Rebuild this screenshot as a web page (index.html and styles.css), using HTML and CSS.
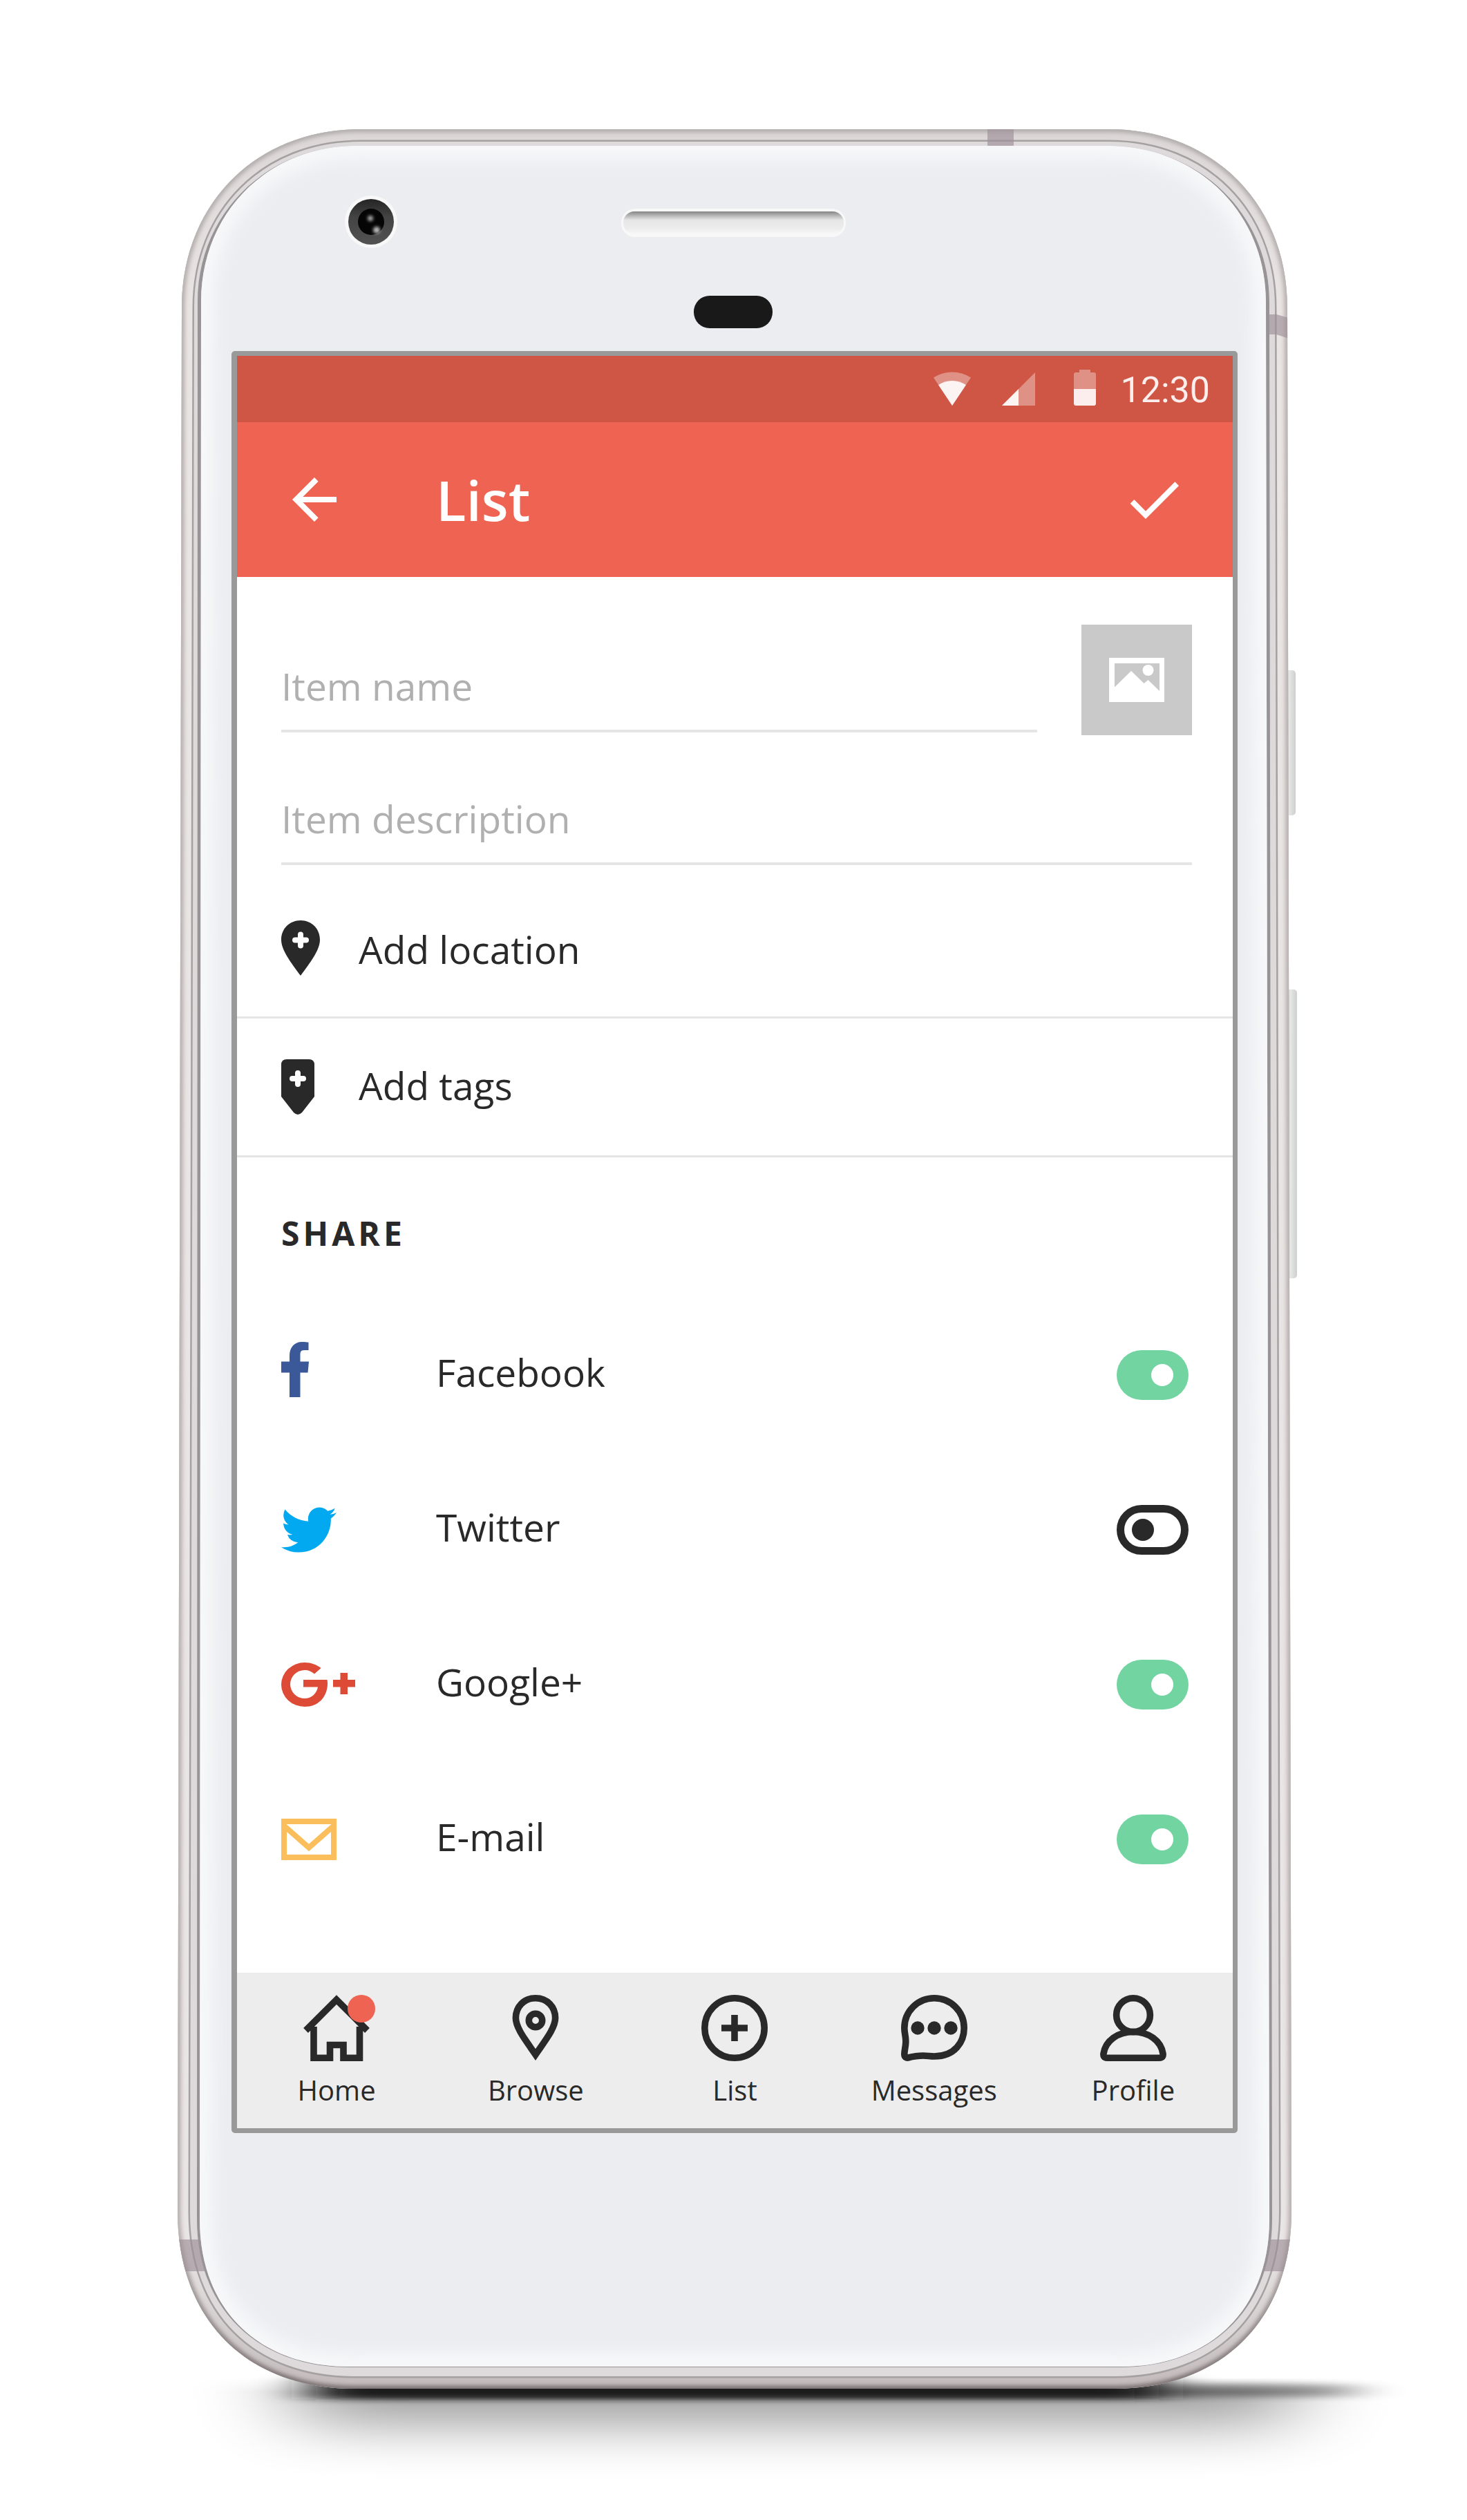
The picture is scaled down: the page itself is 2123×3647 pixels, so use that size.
FILE: index.html
```html
<!DOCTYPE html>
<html lang="en">
<head>
<meta charset="utf-8">
<meta name="viewport" content="width=device-width, initial-scale=1">
<title>List</title>
<link rel="stylesheet" href="styles.css">
</head>
<body>
<div class="stage">
  <div class="phone">
    <svg class="phone-art" viewBox="0 0 1612 3270" preserveAspectRatio="none" aria-hidden="true">
      <defs>
        <path id="body-shape" d="M264 0H1348C1498 0 1606 108 1606 258L1612 3014C1612 3170 1512 3270 1356 3270H256C100 3270 0 3170 0 3014L6 258C6 108 114 0 264 0Z"/>
        <path id="face-shape" d="M260 24H1346C1477 24 1575 122 1575 250L1580 3025C1580 3155 1495 3238 1364 3238H248C117 3238 32 3155 32 3025L34 250C34 122 129 24 260 24Z"/>
        <clipPath id="body-clip"><use href="#body-shape"/></clipPath>
        <clipPath id="face-clip"><use href="#face-shape"/></clipPath>
        <linearGradient id="edge" gradientUnits="userSpaceOnUse" x1="0" y1="0" x2="0" y2="3270">
          <stop offset="0" stop-color="#aca8a7"/><stop offset=".08" stop-color="#b0a8a8"/>
          <stop offset=".93" stop-color="#b0a8a8"/><stop offset="1" stop-color="#716768"/>
        </linearGradient>
        <linearGradient id="metal" gradientUnits="userSpaceOnUse" x1="0" y1="0" x2="0" y2="3270">
          <stop offset="0" stop-color="#dcd6d6"/><stop offset=".08" stop-color="#eae5e4"/>
          <stop offset=".94" stop-color="#e9e5e4"/><stop offset="1" stop-color="#c2babb"/>
        </linearGradient>
        <linearGradient id="key" x1="0" x2="1"><stop offset="0" stop-color="#c3c5c4"/><stop offset=".4" stop-color="#e6e8e6"/><stop offset="1" stop-color="#cdcfcf"/></linearGradient>
        <linearGradient id="slot" x1="0" y1="0" x2="0" y2="1"><stop offset="0" stop-color="#858585"/><stop offset=".16" stop-color="#b0b0b0"/><stop offset=".38" stop-color="#e6e6e6"/><stop offset=".75" stop-color="#ededed"/><stop offset="1" stop-color="#f8f8f8"/></linearGradient>
        <linearGradient id="lens" x1="0" y1="0" x2="0" y2="1"><stop offset="0" stop-color="#242424"/><stop offset=".4" stop-color="#444"/><stop offset="1" stop-color="#525252"/></linearGradient>
        <linearGradient id="fade" x1="0" y1="0" x2="0" y2="1"><stop offset="0" stop-color="#000"/><stop offset=".1" stop-color="#fff"/></linearGradient>
        <mask id="floor" maskUnits="userSpaceOnUse" x="-200" y="3254" width="2066" height="206"><rect x="-200" y="3254" width="2066" height="206" fill="url(#fade)"/></mask>
        <filter id="blur-edge" x="-5%" y="-5%" width="110%" height="110%"><feGaussianBlur stdDeviation="3"/></filter>
        <filter id="blur-glow" x="-5%" y="-5%" width="110%" height="110%"><feGaussianBlur stdDeviation="14"/></filter>
        <filter id="blur-contact" x="-20%" y="-200%" width="140%" height="500%"><feGaussianBlur stdDeviation="38 4"/></filter>
        <filter id="blur-floor" x="-20%" y="-200%" width="140%" height="500%"><feGaussianBlur stdDeviation="70 38"/></filter>
        <filter id="blur-dot" x="-100%" y="-100%" width="300%" height="300%"><feGaussianBlur stdDeviation="2"/></filter>
      </defs>

      <g mask="url(#floor)"><rect x="170" y="3190" width="1440" height="130" opacity=".4" filter="url(#blur-floor)"/></g>
      <rect x="260" y="3264" width="1440" height="18" opacity=".34" filter="url(#blur-contact)"/>
      <rect x="200" y="3252" width="1220" height="33" fill="#1c1c1c" filter="url(#blur-contact)"/>

      <rect x="1602" y="783" width="16" height="210" rx="5" fill="url(#key)"/>
      <rect x="1604" y="1245" width="16" height="418" rx="5" fill="url(#key)"/>

      <g clip-path="url(#body-clip)">
        <use href="#body-shape" fill="#dedadb"/>
        <g fill="none">
          <use href="#body-shape" stroke="#a5a1a2" stroke-width="36"/>
          <use href="#body-shape" stroke="url(#metal)" stroke-width="31"/>
          <use href="#body-shape" stroke="url(#edge)" stroke-width="8" filter="url(#blur-edge)"/>
        </g>
        <g fill="#9c8f96" opacity=".65">
          <rect x="1172" y="0" width="38" height="25"/>
          <path d="M1570 268H1590L1612 274V304L1590 297H1570Z"/>
          <rect x="0" y="3054" width="50" height="46"/>
          <rect x="1560" y="3054" width="52" height="46"/>
        </g>
        <path d="M260 24H1346C1477 24 1580 122 1580 250L1584 3025C1584 3155 1495 3239 1364 3239H248C117 3239 28 3155 28 3025L29 250C29 122 129 24 260 24Z" fill="#989495"/>
      </g>
      <use href="#face-shape" fill="#ecedf1"/>
      <g clip-path="url(#face-clip)"><use href="#face-shape" fill="none" stroke="#fbfcfc" stroke-width="28" filter="url(#blur-glow)"/></g>

      <circle cx="280" cy="134" r="38" fill="#f8f8f8"/>
      <circle cx="280" cy="134" r="33" fill="url(#lens)"/>
      <circle cx="280" cy="134" r="19" fill="#050505"/>
      <circle cx="279" cy="129" r="4" fill="#aaa" filter="url(#blur-dot)"/>
      <circle cx="288" cy="146" r="5" fill="#bbb" filter="url(#blur-dot)"/>
      <rect x="642" y="115" width="325" height="41" rx="20" fill="#f8f8f9"/>
      <rect x="645" y="119" width="319" height="33" rx="16" fill="url(#slot)"/>
      <rect x="747" y="241" width="114" height="47" rx="23" fill="#191919"/>
    </svg>

    <main class="screen">
      <div class="status-bar">
        <svg class="status-icon" viewBox="0 0 96 56" aria-hidden="true"><path d="M48 52L21 11.500C37 .800 59 .800 75 11.500Z" fill="#fff" opacity=".35"/><path d="M48 52L28 22C40 14 56 14 68 22Z" fill="#fff" opacity=".9"/></svg>
        <svg class="status-icon" viewBox="0 0 96 56" aria-hidden="true"><path d="M24 52L72 4V52Z" fill="#fff" opacity=".35"/><path d="M24 52L48 28V52Z" fill="#fff" opacity=".9"/></svg>
        <svg class="status-icon" viewBox="0 0 96 56" aria-hidden="true"><path d="M32 28V7Q32 4 35 4H40V0H56V4H61Q64 4 64 7V28Z" fill="#fff" opacity=".35"/><path d="M32 28H64V49Q64 52 61 52H35Q32 52 32 49Z" fill="#fff" opacity=".9"/></svg>
        <time class="clock">12:30</time>
      </div>

      <header class="app-bar">
        <button class="icon-button" type="button" aria-label="Back"><svg viewBox="0 0 24 24" aria-hidden="true"><path fill="#fff" d="M20 11H7.830l5.590-5.590L12 4l-8 8 8 8 1.410-1.410L7.830 13H20v-2z"/></svg></button>
        <h1 class="title">List</h1>
        <button class="icon-button" type="submit" form="item-form" aria-label="Save"><svg viewBox="0 0 24 24" aria-hidden="true"><path fill="#fff" d="M9 16.170L4.830 12l-1.420 1.410L9 19 21 7l-1.410-1.410z"/></svg></button>
      </header>

      <form class="item-form" id="item-form">
        <div class="fields">
          <div class="name-row">
            <input class="field field-name" type="text" placeholder="Item name" aria-label="Item name">
            <button class="photo-button" type="button" aria-label="Add photo">
              <svg width="80" height="64" viewBox="0 0 80 64" aria-hidden="true"><path fill="#fff" fill-rule="evenodd" d="M0 0H80V64H0ZM8 8V42.500L32 19L50.500 37L56.500 32L73 48V8Z"/><circle cx="56.500" cy="18" r="8" fill="#fff"/></svg>
            </button>
          </div>
          <input class="field field-description" type="text" placeholder="Item description" aria-label="Item description">
        </div>

        <button class="add-row add-location" type="button">
          <span class="add-icon"><svg width="56" height="80" viewBox="0 0 56 80" aria-hidden="true"><path fill="#292929" d="M28 0C12 0 0 12 0 28C0 43 14 61 28 80C42 61 56 43 56 28C56 12 44 0 28 0Z"/><path d="M20 28.500H36M28 20.500V36.500" stroke="#fff" stroke-width="8" stroke-linecap="round"/></svg></span>
          <span>Add location</span>
        </button>
        <button class="add-row" type="button">
          <span class="add-icon"><svg width="56" height="80" viewBox="0 0 56 80" aria-hidden="true"><path fill="#292929" d="M8 0H40Q48 0 48 8V54L30 77Q24 83 18 77L0 54V8Q0 0 8 0Z"/><path d="M16 28H32M24 20V36" stroke="#fff" stroke-width="8" stroke-linecap="round"/></svg></span>
          <span>Add tags</span>
        </button>

        <section class="share">
          <h2 class="share-title">SHARE</h2>
          <div class="share-row">
            <span class="share-icon"><svg width="40" height="96" viewBox="0 0 40 96" aria-hidden="true"><path fill="#3b5998" d="M12 80V44.500H0V28.500H12V20C12 8 19 0 30 0C34 0 38 .400 39.500 .800V12H33C28 12 27.500 15 27.500 19V28.500H40L38.500 44.500H27.500V80Z"/></svg></span>
            <label for="share-facebook">Facebook</label>
            <input class="toggle" type="checkbox" id="share-facebook" checked>
          </div>
          <div class="share-row">
            <span class="share-icon"><svg width="80" height="66" viewBox="0 2.200 24 19.600" aria-hidden="true"><path fill="#03a9f0" d="M23.953 4.570a10 10 0 01-2.825.775 4.958 4.958 0 002.163-2.723c-.951.555-2.005.959-3.127 1.184a4.920 4.920 0 00-8.384 4.482C7.690 8.095 4.067 6.130 1.640 3.162a4.822 4.822 0 00-.666 2.475c0 1.710.870 3.213 2.188 4.096a4.904 4.904 0 01-2.228-.616v.060a4.923 4.923 0 003.946 4.827 4.996 4.996 0 01-2.212.085 4.936 4.936 0 004.604 3.417 9.867 9.867 0 01-6.102 2.105c-.390 0-.779-.023-1.170-.067a13.995 13.995 0 007.557 2.209c9.053 0 13.998-7.496 13.998-13.985 0-.210 0-.420-.015-.630A9.935 9.935 0 0024 4.590z"/></svg></span>
            <label for="share-twitter">Twitter</label>
            <input class="toggle" type="checkbox" id="share-twitter">
          </div>
          <div class="share-row">
            <span class="share-icon"><svg width="108" height="64" viewBox="0 0 108 64" aria-hidden="true"><path fill="#dd4b37" d="M32 25H66.500C67 28 67 29 67 32C66 51 53 64 34 64A34 32 0 0 1 34 0C43 0 51 3 57.600 8L48 16.600C44 13 39.500 11 34 11A21 20.500 0 0 0 34 52C43 52 51 46 53 35.500H32ZM75 25H85.500V15H96V25H107V35.500H96V46H85.500V35.500H75Z"/></svg></span>
            <label for="share-google">Google+</label>
            <input class="toggle" type="checkbox" id="share-google" checked>
          </div>
          <div class="share-row">
            <span class="share-icon"><svg width="80" height="60" viewBox="0 0 80 60" aria-hidden="true" fill="none" stroke="#fabf5c" stroke-width="8"><rect x="4" y="4" width="72" height="52"/><path d="M6 12L40 42L74 12"/></svg></span>
            <label for="share-email">E-mail</label>
            <input class="toggle" type="checkbox" id="share-email" checked>
          </div>
        </section>
      </form>

      <nav class="tab-bar">
        <a class="tab" href="#home">
          <span class="tab-icon"><svg viewBox="0 0 96 96" aria-hidden="true"><path d="M15 46V91.200H38.500V72.500H58V91.200H81.500V46M3.500 51.500L48 7L92.500 51.500"/></svg><span class="badge"></span></span>
          Home
        </a>
        <a class="tab" href="#browse">
          <span class="tab-icon"><svg viewBox="0 0 96 96" aria-hidden="true"><path d="M48 4.800C31 4.800 19.400 17.500 19.400 33.600C19.400 48 34 66 48 86.500C62 66 76.600 48 76.600 33.600C76.600 17.500 65 4.800 48 4.800Z"/><circle cx="48" cy="37" r="9.700"/></svg></span>
          Browse
        </a>
        <a class="tab" href="#list">
          <span class="tab-icon"><svg viewBox="0 0 96 96" aria-hidden="true"><circle cx="48" cy="48" r="43.200"/><path d="M29 48H67M48 29V67"/></svg></span>
          List
        </a>
        <a class="tab" href="#messages">
          <span class="tab-icon"><svg viewBox="0 0 96 96" aria-hidden="true"><path d="M48 89C78 89 91.200 68 91.200 48C91.200 24 72 4.800 48 4.800S4.800 24 4.800 48C4.800 56 7 60 6.800 68C6.600 76 4.800 80 4.800 86C5 90 7 91.500 10 91C18 89 22 88 32 88C38 88 42 89 48 89Z"/><g fill="#292929" stroke="none"><circle cx="24" cy="48" r="9.700"/><circle cx="48" cy="48" r="9.700"/><circle cx="72" cy="48" r="9.700"/></g></svg></span>
          Messages
        </a>
        <a class="tab" href="#profile">
          <span class="tab-icon"><svg viewBox="0 0 96 96" aria-hidden="true"><circle cx="48" cy="29.200" r="24.400"/><path d="M5 85C8 66 26 53.500 48 53.500S88 66 91 85C91.600 89 90 91.200 86 91.200H10C6 91.200 4.400 89 5 85Z"/></svg></span>
          Profile
        </a>
      </nav>
    </main>
  </div>
</div>
</body>
</html>
```

FILE: styles.css
```css
* {
  box-sizing: border-box;
}

body {
  margin: 0;
  background: #fff;
  color: #292929;
  font-family: "Open Sans", "Noto Sans", sans-serif;
  font-size: 55px;
  line-height: 76px;
}

button {
  padding: 0;
  border: 0;
  background: none;
  color: inherit;
  font: inherit;
  text-align: left;
}

svg {
  display: block;
}

.stage {
  overflow: hidden;
  padding: 187px 254px 190px 257px;
}

.phone {
  position: relative;
  padding: 321px 78px 370px;
}

.phone-art {
  position: absolute;
  inset: 0;
  width: 100%;
  height: 100%;
  overflow: visible;
}

.screen {
  position: relative;
  border: 7px solid #999;
  border-left-width: 8px;
  border-radius: 5px;
  background: #fff;
}

.status-bar {
  display: flex;
  align-items: center;
  justify-content: flex-end;
  height: 96px;
  padding-right: 33px;
  background: #cf5645;
}

.status-icon {
  width: 96px;
  height: 56px;
}

.clock {
  padding: 4px 0 0 4px;
  color: #fbeeec;
  font-family: Roboto, sans-serif;
  font-size: 52px;
}

.app-bar {
  display: flex;
  align-items: center;
  height: 224px;
  padding: 0 66px 0 64px;
  background: #ee6352;
  color: #fff;
}

.icon-button {
  width: 96px;
  height: 96px;
}

.title {
  flex: 1;
  margin: 0;
  padding-left: 128px;
  font-size: 80px;
  font-weight: 600;
  line-height: 112px;
}

.fields {
  padding: 69px 59px 0 64px;
}

.name-row {
  display: flex;
  align-items: flex-start;
  gap: 64px;
}

.field {
  display: block;
  width: 100%;
  min-width: 0;
  border: 0;
  border-bottom: 4px solid #e5e5e5;
  border-radius: 0;
  background: none;
  color: inherit;
  font: inherit;
}

.field::placeholder {
  color: #b0b0b0;
  opacity: 1;
}

.field-name {
  flex: 1;
  height: 156px;
  padding: 50px 0 26px;
}

.field-description {
  height: 188px;
  padding: 82px 0 26px;
}

.photo-button {
  display: grid;
  flex: none;
  place-items: center;
  width: 160px;
  height: 160px;
  background: #c9c9c9;
}

.add-row {
  display: flex;
  align-items: flex-start;
  width: 100%;
  padding: 59px 64px;
  border-bottom: 3px solid #e5e5e5;
}

.add-location {
  align-items: flex-end;
  padding-top: 80px;
}

.add-icon {
  width: 112px;
  height: 80px;
}

.share {
  padding: 78px 64px 81px;
}

.share-title {
  margin: 0 0 61px;
  font-size: 48px;
  font-weight: 700;
  line-height: 64px;
  letter-spacing: 5px;
}

.share-row {
  display: flex;
  align-items: center;
  height: 224px;
}

.share-icon {
  width: 224px;
}

.share-row label {
  flex: 1;
  padding-bottom: 8px;
}

.toggle {
  display: flex;
  align-items: center;
  width: 104px;
  height: 72px;
  margin: 0;
  padding-left: 11px;
  border: 11px solid #292929;
  border-radius: 36px;
  appearance: none;
}

.toggle::before {
  width: 32px;
  height: 32px;
  border-radius: 50%;
  background: #292929;
  content: "";
}

.toggle:checked {
  padding-left: 50px;
  border: 0;
  background: #72d5a1;
}

.toggle:checked::before {
  background: #fff;
}

.tab-bar {
  display: grid;
  grid-template-columns: repeat(5, 1fr);
  padding: 32px 0 27px;
  background: #ededed;
}

.tab {
  display: flex;
  flex-direction: column;
  align-items: center;
  gap: 14px;
  color: inherit;
  font-size: 40px;
  line-height: 56px;
  text-decoration: none;
}

.tab-icon {
  position: relative;
  width: 96px;
  height: 96px;
  fill: none;
  stroke: #292929;
  stroke-width: 9.6;
}

.badge {
  position: absolute;
  top: 0;
  right: -8px;
  width: 40px;
  height: 40px;
  border-radius: 50%;
  background: #ee6352;
}
```
